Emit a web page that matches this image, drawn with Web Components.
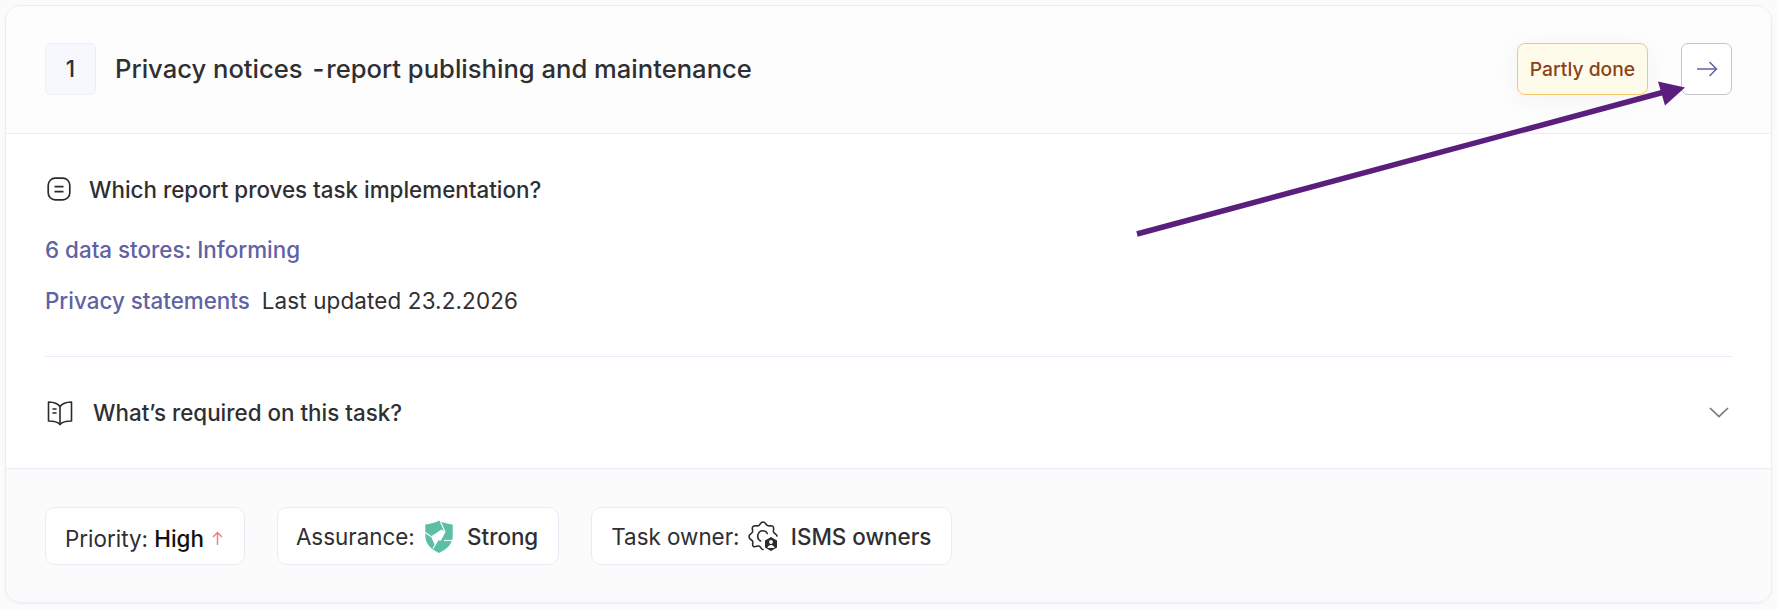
<!DOCTYPE html>
<html><head><meta charset="utf-8"><title>Task</title>
<style>
html,body{margin:0;padding:0;background:#fbfbfc;}
body{width:1778px;height:610px;overflow:hidden;font-family:Inter,"Liberation Sans",sans-serif;color:#2f2f33;position:relative;}
</style></head><body>
<template id="t-card"><style>
:host{display:block;position:absolute;left:5px;top:5px;width:1767px;height:598px;box-sizing:border-box;border:1px solid #ebebf7;border-radius:16px;background:#fff;overflow:hidden;box-shadow:0 1px 3px rgba(60,60,120,.05);}
.w{display:flex;flex-direction:column;height:100%;}
</style><div class="w"><slot></slot></div></template>

<template id="t-header"><style>
:host{display:flex;align-items:center;height:128px;box-sizing:border-box;padding:10px 39px 12px 39px;background:#fdfdfd;border-bottom:1px solid #ebebf7;flex:none;}
.num{width:51px;height:52px;box-sizing:border-box;border:1px solid #eeeefb;border-radius:6px;background:#f7f7fe;display:flex;align-items:center;justify-content:center;font-size:22.4px;font-weight:500;color:#2f2f33;}
.title{margin-left:19px;font-size:25.6px;font-weight:500;color:#2f2f33;white-space:pre;flex:1;}
.right{display:flex;align-items:center;gap:33px;}
</style><div class="num"><slot name="num"></slot></div><div class="title"><slot name="title"></slot></div><div class="right"><slot></slot></div></template>

<template id="t-badge"><style>
:host{display:flex;align-items:center;justify-content:center;width:131px;height:52px;box-sizing:border-box;border:1px solid #f7c66f;border-radius:8px;background:#fffbeb;color:#8a4316;font-size:19.3px;font-weight:500;box-shadow:0 4px 24px rgba(60,60,100,.05);}
</style><slot></slot></template>

<template id="t-arrowbtn"><style>
:host{display:flex;align-items:center;justify-content:center;width:51px;height:52px;box-sizing:border-box;border:1px solid #c4c4c8;border-radius:7px;background:#fff;}
svg{display:block;}
</style><svg width="22" height="16" viewBox="0 0 22 16" fill="none" stroke="#6063a6" stroke-width="1.5"><path d="M1 8H20"/><path d="M13.5 1L20.5 8L13.5 15"/></svg></template>

<template id="t-evidence"><style>
:host{display:block;height:223px;box-sizing:border-box;margin:0 39px;padding-top:35px;border-bottom:1px solid #ebebf7;flex:none;}
</style><slot></slot></template>

<template id="t-question"><style>
:host{display:flex;align-items:center;gap:18px;height:40px;font-size:22.4px;font-weight:500;color:#2f2f33;}
svg{display:block;flex:none;margin-left:2px;}
</style><svg width="24" height="24" viewBox="0 0 24 24" fill="none" stroke="#2b2b2e" stroke-width="1.7"><rect x="1.2" y="1.2" width="21.6" height="21.6" rx="7"/><path d="M7.5 9.7H16.5M7.5 14.7H16.5"/></svg><span><slot></slot></span></template>

<template id="t-link"><style>
:host{display:block;color:#5f62a3;font-size:22.4px;font-weight:500;}
</style><slot></slot></template>

<template id="t-required"><style>
:host{display:flex;align-items:center;height:112px;box-sizing:border-box;padding:0 42px 0 41px;font-size:22.4px;font-weight:500;color:#2f2f33;border-bottom:1px solid #ebebf7;flex:none;}
.t{flex:1;margin-left:20px;}
svg{display:block;flex:none;}
</style><svg width="26" height="26" viewBox="0 0 26 26" fill="none" stroke="#2b2b2e" stroke-width="1.6" stroke-linejoin="round" stroke-linecap="round"><path d="M13 6.5C11 3.8 7 2.2 1.5 2V21C7 21 11 22.2 13 24.5C15 22.2 19 21 24.5 21V2C19 2.2 15 3.8 13 6.5Z"/><path d="M13 6.5V24.5"/><path d="M6 9H9M6 13H9"/></svg><span class="t"><slot></slot></span><svg width="20" height="11" viewBox="0 0 20 11" fill="none" stroke="#77777c" stroke-width="1.7"><path d="M1 1L10 9.5L19 1"/></svg></template>

<template id="t-footer"><style>
:host{display:flex;flex:1;align-items:flex-start;gap:32px;padding:38px 39px 0;background:#fbfbfc;box-sizing:border-box;}
</style><slot></slot></template>

<template id="t-pill"><style>
:host{display:flex;align-items:center;height:58px;box-sizing:border-box;border:1px solid #ebebf7;border-radius:10px;background:#fff;padding:0 20px 0 19px;font-size:22.4px;color:#2f2f33;white-space:pre;}
</style><slot></slot></template>

<task-card>
  <task-header>
    <span slot="num">1</span>
    <span slot="title">Privacy notices <span style="margin-left:3px">-</span><span style="margin-left:2px">report publishing and maintenance</span></span>
    <status-badge>Partly done</status-badge>
    <arrow-button></arrow-button>
  </task-header>
  <evidence-section>
    <task-question>Which report proves task implementation?</task-question>
    <task-link style="margin-top:28px;line-height:26px;">6 data stores: Informing</task-link>
    <div style="display:flex;gap:12px;align-items:center;margin-top:25px;line-height:26px;font-size:22.4px;font-weight:400;color:#2f2f33;"><task-link>Privacy statements</task-link><span style="letter-spacing:.15px">Last updated 23.2.2026</span></div>
  </evidence-section>
  <required-row>What’s required on this task?</required-row>
  <task-footer>
    <meta-pill style="padding-right:21px"><span style="position:relative;top:2px">Priority: <b style="font-weight:500;color:#111">High</b></span><svg style="margin-left:8px;margin-top:3px" width="11" height="14" viewBox="0 0 11 14" fill="none" stroke="#ee7a78" stroke-width="1.4"><path d="M5.5 14V1.5M1 6L5.5 1.5L10 6"/></svg></meta-pill>
    <meta-pill style="padding-left:18px;padding-right:20px">Assurance: <svg style="margin:0 0 0 4px" width="28" height="33" viewBox="0 0 28 33"><path fill="#5bbfa8" d="M14 0.5C17 2.6 23 4 27.7 4.6V16C27.7 24 21.5 29.5 14 33C6.5 29.5 0.3 24 0.3 16V4.6C5 4 11 2.6 14 0.5Z"/><g stroke="#fff" stroke-width="1.1" fill="none"><path d="M15 0.5L20 12"/><path d="M27.7 20.5H19"/><path d="M8 28.5L13 20"/><path d="M0.3 12.5L6 16.5"/></g><path fill="#fff" d="M6 16.5L16.5 9.5L20.5 12L16 20.5H13L10 25.5Z"/></svg><span style="font-weight:500;margin-left:14px">Strong</span></meta-pill>
    <meta-pill>Task owner: <svg style="margin:0 13px 0 2px" width="30" height="30" viewBox="0 0 30 30" fill="none"><path stroke="#2b2b2e" stroke-width="1.6" stroke-linejoin="round" stroke-linecap="round" d="M15 28.5C13 28.5 13 25.5 11 25C9 24.5 7.5 26.5 5.5 25.5C3.5 24 5.5 21.5 4.5 20C3.5 18.5 1 18.5 1 15.5C1 13 3.5 13 4.5 11C5 9 3.5 7 5 5.5C6.5 4 9 5.5 11 4.5C12.5 3.5 12.5 1 15 1C17.5 1 17.5 3.5 19.5 4.5C21.5 5.5 23.5 4 25 5.5C26.5 7 25 9 25.5 11C26 12.5 28.5 13 29 15"/><path stroke="#2b2b2e" stroke-width="1.6" stroke-linecap="round" d="M12.5 20C10 18.5 9.3 16 10 13.5C11 10.8 13.3 9.5 15.5 9.8C17.3 10 18.7 11 19.3 12.5"/><path fill="#2b2b2e" d="M23 16L29 19.5V26.5L23 30L17 26.5V19.5Z"/><circle cx="23" cy="21" r="1.9" fill="#fff"/><path fill="#fff" d="M19.5 27C19.9 24.8 21.3 24 23 24C24.7 24 26.1 24.8 26.5 27Z"/></svg><span style="font-weight:500">ISMS owners</span></meta-pill>
  </task-footer>
</task-card>
<callout-arrow></callout-arrow>
<template id="t-callout"><style>
:host{display:block;position:absolute;left:0;top:0;width:1778px;height:610px;pointer-events:none;}
svg{display:block;}
</style><svg width="1778" height="610" viewBox="0 0 1778 610"><path d="M1137 234L1668 91" stroke="#5a1e7d" stroke-width="5.5" fill="none"/><path fill="#5a1e7d" d="M1685 87.5L1658 81.5L1665 105.5Z"/></svg></template>
<script>
const defs={'task-card':'t-card','task-header':'t-header','status-badge':'t-badge','arrow-button':'t-arrowbtn','evidence-section':'t-evidence','task-question':'t-question','task-link':'t-link','required-row':'t-required','task-footer':'t-footer','meta-pill':'t-pill','callout-arrow':'t-callout'};
for(const [n,id] of Object.entries(defs)){
  customElements.define(n,class extends HTMLElement{constructor(){super();this.attachShadow({mode:'open'}).appendChild(document.getElementById(id).content.cloneNode(true));}});
}
</script>
</body></html>
